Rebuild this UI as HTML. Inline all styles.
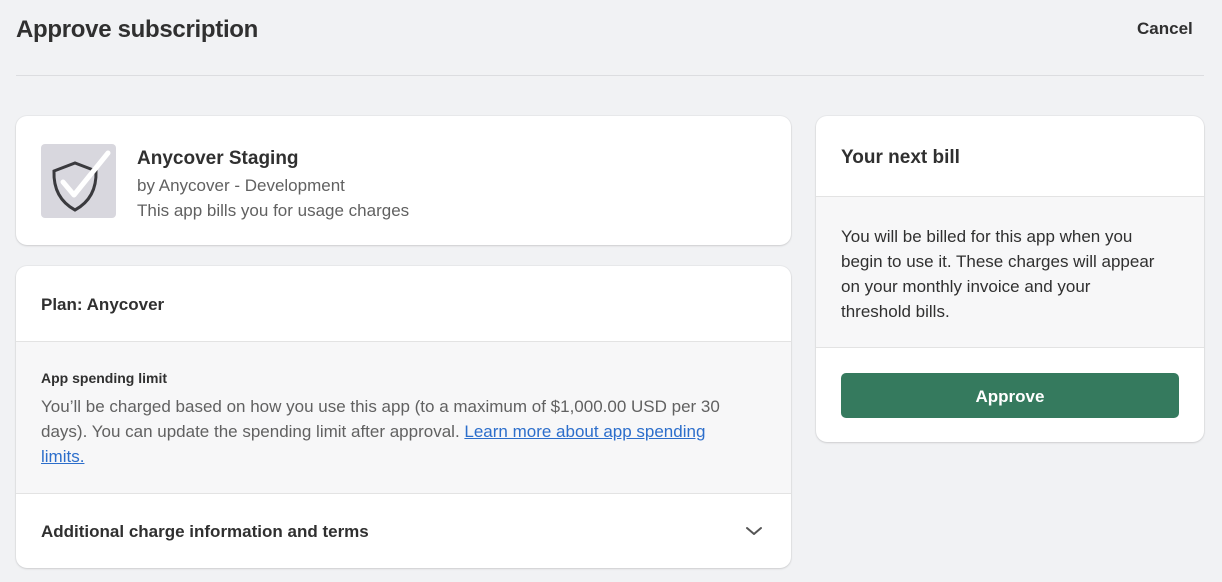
<!DOCTYPE html>
<html><head><style>
body{margin:0;background:#f1f2f4;font-family:"Liberation Sans",sans-serif;color:#303030;width:1222px;height:582px;overflow:hidden;position:relative}
.a{position:absolute}
.card{position:absolute;background:#fff;border-radius:11px;box-shadow:0 1px 2px rgba(0,0,0,.12),0 0 0 1px rgba(0,0,0,.03);overflow:hidden}
.t{position:absolute;white-space:nowrap}
</style></head><body>
<div class="t" style="left:16px;top:16px;font-size:24px;font-weight:bold;color:#303030;letter-spacing:-0.3px">Approve subscription</div>
<div class="t" style="left:1137px;top:19px;font-size:17px;font-weight:bold">Cancel</div>
<div class="a" style="left:16px;top:75px;width:1188px;height:1px;background:#dcdde0"></div>

<div class="card" style="left:16px;top:116px;width:775px;height:129px">
  <div class="a" style="left:25px;top:28px;width:75px;height:74px;background:#d8d7de;border-radius:4px">
    <svg width="75" height="74" viewBox="0 0 75 74"><path d="M13 27 L34 19 L55 27 Q56 54 34 66 Q12 54 13 27 Z" fill="none" stroke="#3a3a3e" stroke-width="3"/><path d="M22 38 L33 51 L67 9" fill="none" stroke="#fff" stroke-width="5" stroke-linecap="round" stroke-linejoin="round"/></svg>
  </div>
  <div class="t" style="left:121px;top:32px;font-size:19px;font-weight:bold">Anycover Staging</div>
  <div class="t" style="left:121px;top:60px;font-size:17px;color:#616161">by Anycover - Development</div>
  <div class="t" style="left:121px;top:85px;font-size:17px;color:#616161">This app bills you for usage charges</div>
</div>

<div class="card" style="left:16px;top:266px;width:775px;height:302px">
  <div class="t" style="left:25px;top:29px;font-size:17px;font-weight:bold">Plan: Anycover</div>
  <div class="a" style="left:0;top:75px;width:775px;height:151px;background:#f7f7f8;border-top:1px solid #e3e3e3;border-bottom:1px solid #e3e3e3"></div>
  <div class="t" style="left:25px;top:104px;font-size:14px;font-weight:bold">App spending limit</div>
  <div class="a" style="left:25px;top:128px;width:700px;font-size:17px;line-height:25px;color:#616161">You’ll be charged based on how you use this app (to a maximum of $1,000.00 USD per 30 days). You can update the spending limit after approval. <span style="color:#2c6ecb;text-decoration:underline">Learn more about app spending limits.</span></div>
  <div class="t" style="left:25px;top:256px;font-size:17px;font-weight:bold">Additional charge information and terms</div>
  <svg class="a" style="left:729px;top:259px" width="18" height="12" viewBox="0 0 18 12"><path d="M2 3 L9 9 L16 3" fill="none" stroke="#555" stroke-width="2" stroke-linecap="round" stroke-linejoin="round"/></svg>
</div>

<div class="card" style="left:816px;top:116px;width:388px;height:326px">
  <div class="t" style="left:25px;top:31px;font-size:19px;font-weight:bold">Your next bill</div>
  <div class="a" style="left:0;top:80px;width:388px;height:150px;background:#f7f7f8;border-top:1px solid #e3e3e3;border-bottom:1px solid #e3e3e3"></div>
  <div class="a" style="left:25px;top:108px;width:318px;font-size:17px;line-height:25px">You will be billed for this app when you begin to use it. These charges will appear on your monthly invoice and your threshold bills.</div>
  <div class="a" style="left:25px;top:257px;width:338px;height:45px;background:#357a5e;border-radius:5px;color:#fff;font-weight:bold;font-size:17px;text-align:center;line-height:47px">Approve</div>
</div>
</body></html>
